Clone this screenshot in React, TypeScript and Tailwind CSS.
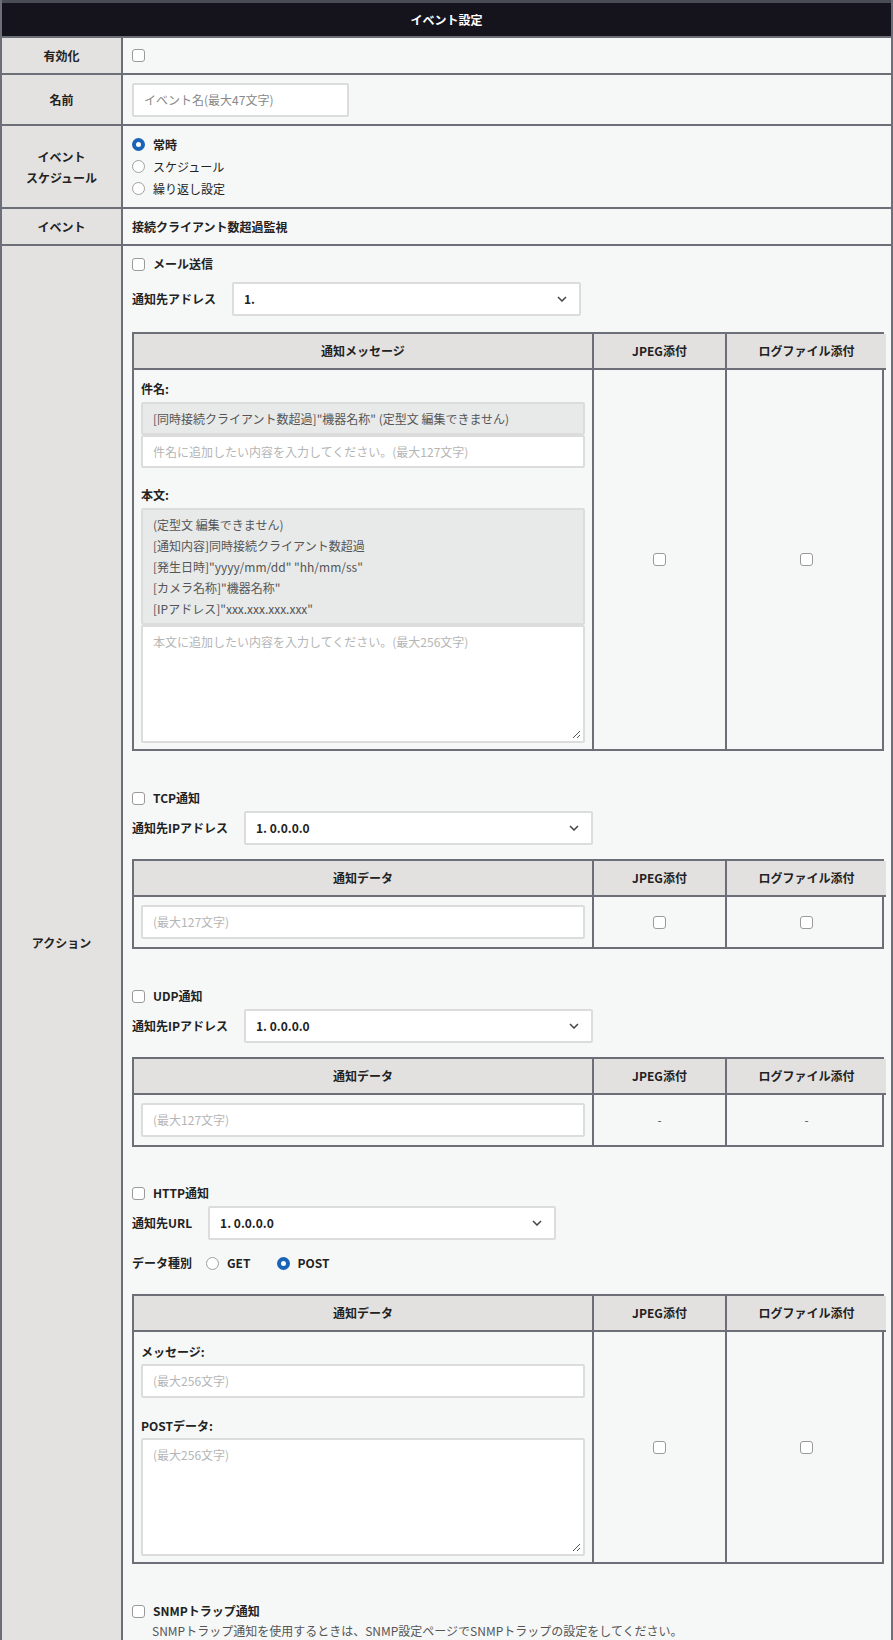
import React from "react";

const font = { fontFamily: '"Noto Sans CJK JP", "Noto Sans", sans-serif' };

function Check({ className = "" }: { className?: string }) {
  return <span className={"inline-block w-[13px] h-[13px] rounded-[3px] border border-[#9a9a9a] bg-white shrink-0 " + className} />;
}
function Radio({ on }: { on?: boolean }) {
  return on ? (
    <span className="inline-block w-[13px] h-[13px] rounded-full border-[4px] border-[#1a64b8] bg-white shrink-0" />
  ) : (
    <span className="inline-block w-[13px] h-[13px] rounded-full border border-[#a0a0a0] bg-white shrink-0" />
  );
}
function Select({ value, w }: { value: string; w: string }) {
  return (
    <div className={"h-[34px] bg-white border-2 border-[#dcdcdc] rounded-[2px] flex items-center justify-between pl-[10px] pr-[12px] text-[12px] text-[#222] " + w}>
      <span>{value}</span>
      <svg width="10" height="6" viewBox="0 0 10 6"><path d="M1 1l4 4 4-4" stroke="#444" strokeWidth="1.5" fill="none" /></svg>
    </div>
  );
}
function Input({ ph, h = "h-[33px]", area }: { ph: string; h?: string; area?: boolean }) {
  return (
    <div className={"relative bg-white border-2 border-[#dcdcdc] rounded-[2px] px-[10px] text-[12px] text-[#b5b5b5] flex " + (area ? "items-start pt-[6px] " : "items-center ") + h}>
      {ph}
      {area && (
        <svg className="absolute right-[2px] bottom-[2px]" width="10" height="10" viewBox="0 0 10 10"><path d="M9 2L2 9M9 6L6 9" stroke="#555" strokeWidth="1" /></svg>
      )}
    </div>
  );
}
function Table({ head, children, jpeg, log }: { head: string; children: React.ReactNode; jpeg: React.ReactNode; log: React.ReactNode }) {
  return (
    <div className="grid grid-cols-[460px_133px_159px] border-2 border-[#6c6f78] w-[752px]">
      <div className="h-[36px] bg-[#e3e1df] border-b-2 border-r-2 border-[#6c6f78] flex items-center justify-center text-[12px] font-bold text-[#222]">{head}</div>
      <div className="h-[36px] bg-[#e3e1df] border-b-2 border-r-2 border-[#6c6f78] flex items-center justify-center text-[12px] font-bold text-[#222]">JPEG添付</div>
      <div className="h-[36px] bg-[#e3e1df] border-b-2 border-[#6c6f78] flex items-center justify-center text-[12px] font-bold text-[#222]">ログファイル添付</div>
      <div className="border-r-2 border-[#6c6f78] px-[7px]">{children}</div>
      <div className="border-r-2 border-[#6c6f78] flex items-center justify-center text-[12px] text-[#555]">{jpeg}</div>
      <div className="flex items-center justify-center text-[12px] text-[#555]">{log}</div>
    </div>
  );
}
function Row({ label, children, h, cls = "" }: { label: React.ReactNode; children: React.ReactNode; h?: string; cls?: string }) {
  return (
    <div className={"grid grid-cols-[121px_1fr] border-b-2 border-[#6c6f78] " + (h || "")}>
      <div className="bg-[#e4e2e0] border-r-2 border-[#6c6f78] flex items-center justify-center text-center text-[12px] font-bold text-[#222] leading-[21px]">{label}</div>
      <div className={"bg-[#f6f8f8] pl-[9px] text-[12px] text-[#222] " + cls}>{children}</div>
    </div>
  );
}

export default function App() {
  return (
    <div style={font} className="w-[893px] h-[1640px] bg-[#f6f8f8] border-l-2 border-r-2 border-[#6c6f78] overflow-hidden">
      <div className="h-[3px] bg-[#4a4c55]" />
      <div className="h-[35px] bg-[#15141d] flex items-center justify-center text-white text-[12px] font-bold border-b-2 border-[#6c6f78]">イベント設定</div>
      <Row label="有効化" h="h-[37px]" cls="flex items-center"><Check /></Row>
      <Row label="名前" h="h-[51px]" cls="flex items-center">
        <div className="w-[217px] h-[34px] bg-white border-2 border-[#dcdcdc] rounded-[2px] flex items-center px-[10px] text-[12px] text-[#888]">イベント名(最大47文字)</div>
      </Row>
      <Row label={<>イベント<br />スケジュール</>} h="h-[83px]" cls="flex flex-col justify-center gap-[4px] font-bold">
        <div className="flex items-center gap-[8px]"><Radio on />常時</div>
        <div className="flex items-center gap-[8px] font-normal"><Radio />スケジュール</div>
        <div className="flex items-center gap-[8px] font-normal"><Radio />繰り返し設定</div>
      </Row>
      <Row label="イベント" h="h-[37px]" cls="flex items-center font-bold">接続クライアント数超過監視</Row>
      <div className="grid grid-cols-[121px_1fr] h-[1393px]">
        <div className="bg-[#e4e2e0] border-r-2 border-[#6c6f78] flex items-center justify-center text-[12px] font-bold text-[#222]">アクション</div>
        <div className="pl-[9px] pt-[11px] text-[12px] text-[#222]">
          <div className="flex items-center gap-[8px] h-[14px] font-bold"><Check />メール送信</div>
          <div className="flex items-center gap-[16px] mt-[11px] font-bold">
            <span>通知先アドレス</span>
            <Select value="1." w="w-[349px]" />
          </div>
          <div className="mt-[16px]">
            <Table head="通知メッセージ" jpeg={<Check />} log={<Check />}>
              <div className="pt-[10px] pb-[6px]">
                <div className="font-bold h-[18px] leading-[18px]">件名:</div>
                <div className="mt-[4px] h-[33px] bg-[#e8e9e9] border-2 border-[#dcdcdc] rounded-[2px] flex items-center px-[10px] text-[#555]">[同時接続クライアント数超過]"機器名称" (定型文 編集できません)</div>
                <Input ph="件名に追加したい内容を入力してください。(最大127文字)" />
                <div className="font-bold h-[18px] leading-[18px] mt-[18px]">本文:</div>
                <div className="mt-[4px] h-[117px] bg-[#e8e9e9] border-2 border-[#dcdcdc] rounded-[2px] px-[10px] pt-[4px] text-[#555] leading-[21px]">
                  <div>(定型文 編集できません)</div>
                  <div>[通知内容]同時接続クライアント数超過</div>
                  <div>[発生日時]"yyyy/mm/dd" "hh/mm/ss"</div>
                  <div>[カメラ名称]"機器名称"</div>
                  <div>[IPアドレス]"xxx.xxx.xxx.xxx"</div>
                </div>
                <Input ph="本文に追加したい内容を入力してください。(最大256文字)" h="h-[118px]" area />
              </div>
            </Table>
          </div>

          <div className="flex items-center gap-[8px] h-[14px] font-bold mt-[40px]"><Check />TCP通知</div>
          <div className="flex items-center gap-[16px] mt-[6px] font-bold">
            <span>通知先IPアドレス</span>
            <Select value="1. 0.0.0.0" w="w-[349px]" />
          </div>
          <div className="mt-[14px]">
            <Table head="通知データ" jpeg={<Check />} log={<Check />}>
              <div className="py-[8px]"><Input ph="(最大127文字)" h="h-[34px]" /></div>
            </Table>
          </div>

          <div className="flex items-center gap-[8px] h-[14px] font-bold mt-[40px]"><Check />UDP通知</div>
          <div className="flex items-center gap-[16px] mt-[6px] font-bold">
            <span>通知先IPアドレス</span>
            <Select value="1. 0.0.0.0" w="w-[349px]" />
          </div>
          <div className="mt-[14px]">
            <Table head="通知データ" jpeg="-" log="-">
              <div className="py-[8px]"><Input ph="(最大127文字)" h="h-[34px]" /></div>
            </Table>
          </div>

          <div className="flex items-center gap-[8px] h-[14px] font-bold mt-[39px]"><Check />HTTP通知</div>
          <div className="flex items-center gap-[16px] mt-[6px] font-bold">
            <span>通知先URL</span>
            <Select value="1. 0.0.0.0" w="w-[348px]" />
          </div>
          <div className="flex items-center gap-[8px] mt-[14px] font-bold h-[18px]">
            <span className="mr-[6px]">データ種別</span>
            <Radio />GET
            <span className="w-[10px]" />
            <Radio on />POST
          </div>
          <div className="mt-[22px]">
            <Table head="通知データ" jpeg={<Check />} log={<Check />}>
              <div className="pt-[12px] pb-[6px]">
                <div className="font-bold h-[16px] leading-[16px]">メッセージ:</div>
                <div className="mt-[4px]"><Input ph="(最大256文字)" h="h-[34px]" /></div>
                <div className="font-bold h-[16px] leading-[16px] mt-[20px]">POSTデータ:</div>
                <div className="mt-[4px]"><Input ph="(最大256文字)" h="h-[118px]" area /></div>
              </div>
            </Table>
          </div>

          <div className="flex items-center gap-[8px] h-[14px] font-bold mt-[40px]"><Check />SNMPトラップ通知</div>
          <div className="pl-[20px] mt-[4px] text-[#555]">SNMPトラップ通知を使用するときは、SNMP設定ページでSNMPトラップの設定をしてください。</div>
        </div>
      </div>
    </div>
  );
}
